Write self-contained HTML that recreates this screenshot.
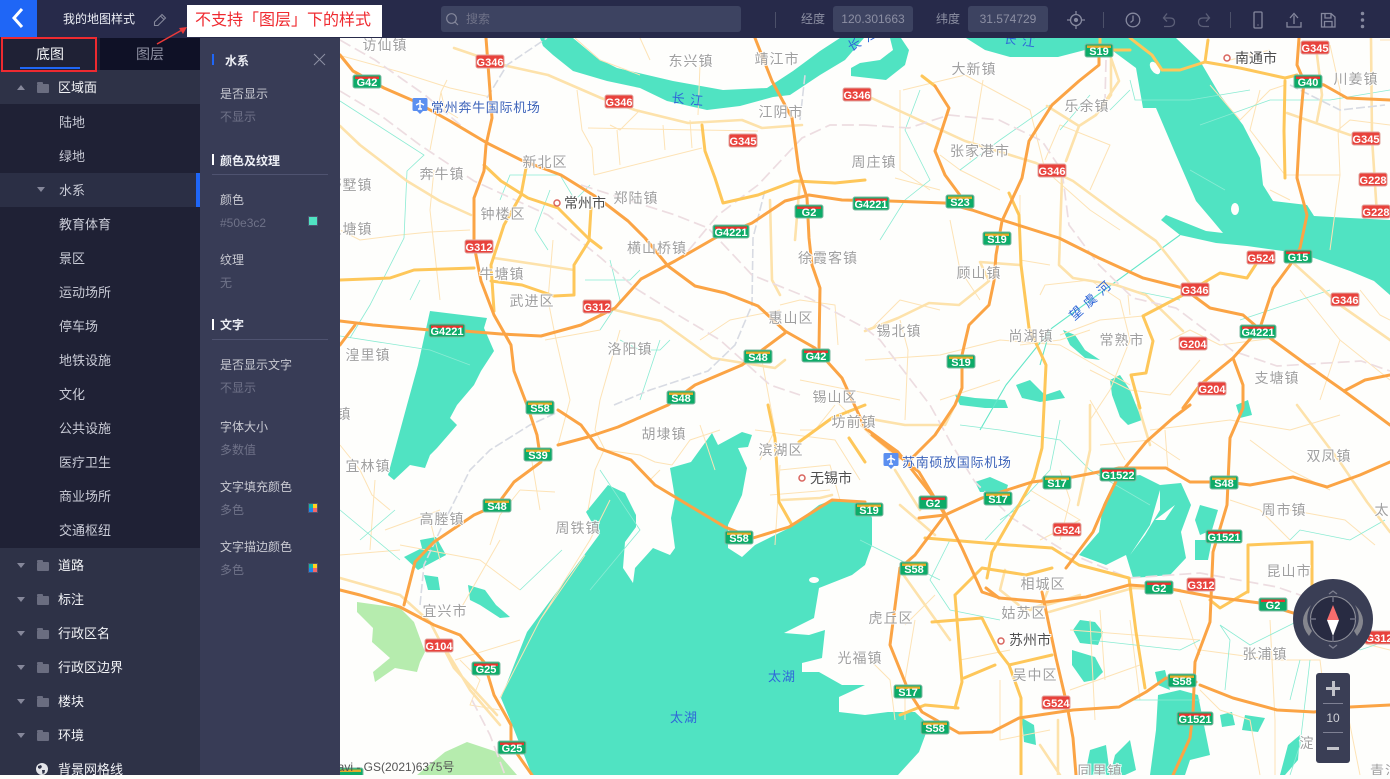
<!DOCTYPE html>
<html lang="zh-CN"><head><meta charset="utf-8"><title>我的地图样式</title>
<style>
html,body{margin:0;padding:0;width:1390px;height:775px;overflow:hidden;background:#fdfdfb;font-family:"Liberation Sans","Noto Sans CJK SC",sans-serif}
*{box-sizing:border-box}
#map{position:absolute;left:0;top:0;width:1390px;height:775px}
.abs,.t{position:absolute;white-space:nowrap}
#top{position:absolute;left:0;top:0;width:1390px;height:38px;background:#272a4a}
#back{position:absolute;left:0;top:0;width:37px;height:37px;background:#1f66f6}
.inp{position:absolute;top:6px;height:26px;background:#3d4361;border-radius:3px;color:#8c8fa3;font-size:12px;line-height:26px;text-align:center}
.sep{position:absolute;top:12px;width:1px;height:16px;background:#4c5069}
#side{position:absolute;left:0;top:38px;width:200px;height:737px;background:#2e3247}
#sub{position:absolute;left:0;top:66px;width:200px;height:444px;background:#1f2135}
#panel{position:absolute;left:200px;top:38px;width:140px;height:737px;background:#383c56}
.it{position:absolute;left:59px;font-size:13px;line-height:18px;color:#c9cbd6;margin-top:1px}
.pr{position:absolute;left:58px;font-size:13px;line-height:18px;color:#f2f3f6;margin-top:1px}
.l{position:absolute;left:20px;font-size:12px;line-height:16px;color:#c9cad2;margin-top:1px}
.v{position:absolute;left:20px;font-size:12px;line-height:16px;color:#6f7288;margin-top:1px}
.h{position:absolute;left:20px;font-size:12px;line-height:16px;color:#eceef4;font-weight:bold;margin-top:1px}
.bar{position:absolute;left:12px;width:2px;height:11px;background:#fff}
.ln{position:absolute;left:12px;width:116px;height:1px;background:#4f5370}
.ar{position:absolute;left:17px;width:0;height:0;border-left:4.5px solid transparent;border-right:4.5px solid transparent;border-top:5px solid #85879a}
.fd{position:absolute;left:37px;width:12px;height:9px;background:#6a6d80;border-radius:1px;margin-top:1px}
.fd:before{content:"";position:absolute;left:0;top:-2px;width:6px;height:2px;background:#6a6d80;border-radius:1px 1px 0 0}
.sw{position:absolute;left:109px;width:8px;height:8px}
#map text{font-family:"Liberation Sans","Noto Sans CJK SC",sans-serif}
.g{font-size:14px;fill:#a0a0a0;letter-spacing:1px;text-anchor:middle;paint-order:stroke;stroke:#fff;stroke-width:2px;stroke-opacity:.8}
.d{font-size:14px;fill:#4f4f4f;paint-order:stroke;stroke:#fff;stroke-width:2px}
.b{font-size:13px;fill:#3b62b8;letter-spacing:.7px;paint-order:stroke;stroke:#fff;stroke-width:1.5px}
.w{font-size:13px;fill:#2f66d8;letter-spacing:1px;text-anchor:middle}
.n{font-size:11px;fill:#fff;font-weight:bold;text-anchor:middle}
</style></head><body>

<svg id="map" viewBox="0 0 1390 775" xmlns="http://www.w3.org/2000/svg">
<defs>
<g id="r1"><rect x="-14" y="-6" width="28" height="13" rx="2" fill="#e8423c" stroke="#e0a7a0"/></g>
<g id="g1"><rect x="-14" y="-6" width="28" height="13" rx="2" fill="#0dab68" stroke="#7fb9a2"/><rect x="-12" y="-4.5" width="24" height="2.5" fill="#e8352f"/></g>
<g id="g2"><rect x="-18" y="-6" width="36" height="13" rx="2" fill="#0dab68" stroke="#7fb9a2"/><rect x="-16" y="-4.5" width="32" height="2.5" fill="#e8352f"/></g>
<g id="y1"><rect x="-14" y="-6" width="28" height="13" rx="2" fill="#0dab68" stroke="#7fb9a2"/><rect x="-12" y="-4.5" width="24" height="2.5" fill="#e2ab2c"/></g>
</defs>
<rect width="1390" height="775" fill="#fefefc"/>

<!-- forest -->
<g fill="#b6ecae">
<path d="M357 602L400 608L414 622L425 652L420 662L417 672L395 668L375 682L373 672L390 658L372 642L373 628L357 612Z"/>
<path d="M417 775L445 752L467 742L497 752L517 775Z"/>
<path d="M775 775L790 762L815 765L825 775Z"/>
<path d="M828 745L838 728L842 738L832 746Z"/>
</g>

<!-- water -->
<g fill="#50e3c2">
<path d="M540 38H573L597 58L617 68L673 81L723 90L767 88L793 71L820 51L840 38H864L845 60L820 75L790 95L773 97L740 106L707 110L667 101L640 88L607 81L573 71L553 55L543 46Z"/>
<path d="M851 76L886 80L905 65L909 50L901 38H890L893 50L880 60L860 63L851 68Z"/>
<path d="M966 38L985 50L1010 57L1058 57L1085 50L1113 51L1136 68L1143 108L1156 108L1176 155L1196 201L1213 221L1223 233L1206 231L1166 215L1161 220L1180 235L1216 243L1247 246L1283 251L1314 258L1350 271L1374 281L1390 295V220L1350 218L1314 216L1307 205L1273 201L1263 185L1260 158L1243 125L1220 95L1200 61L1176 38Z"/>
<path d="M608 485L625 493L636 515L636 527L625 542L623 568L633 583L635 568L653 548L670 555L675 548L671 518L675 498L670 468L691 462L712 433L718 445L742 432L752 435L748 447L738 448L747 468L742 495L728 525L728 548L742 557L755 545L789 528L819 505L832 500L865 503L872 518L872 545L865 565L852 575L819 588L814 618L784 633L809 635L825 630L822 658L802 663L802 672L819 672L842 685L865 685L839 697L839 712L865 715L888 712L915 712L929 725L919 752L898 775H532L511 722L501 698L527 632L599 535L586 512Z"/>
<path d="M430 311L487 318L484 328L494 351L481 371L474 385L457 405L450 418L457 425L437 448L430 455L425 468L410 465L394 480L388 475L407 405L418 365Z"/>
<path d="M1116 478L1140 475L1160 485L1181 483L1191 505L1181 532L1186 558L1170 575L1133 578L1126 555L1106 565L1079 555L1099 532L1103 505Z"/>
<path d="M975 482L990 477L1008 485L1006 492L980 492Z"/>
<path d="M1080 620L1095 622L1103 632L1098 645L1080 643L1073 630Z"/>
<path d="M1072 650L1095 657L1103 672L1095 680L1084 682L1072 665Z"/>
<path d="M1158 695L1180 690L1198 695L1205 730L1210 755L1190 760L1185 775H1150L1156 730Z"/>
<path d="M1220 715L1232 712L1235 725L1222 727Z"/>
<path d="M1245 715L1265 718L1258 732L1242 730Z"/>
<path d="M1115 755L1130 740L1136 770L1125 775H1110Z"/>
<path d="M1280 775L1288 745L1300 735L1298 760L1285 775Z"/>
<path d="M1155 672L1165 670L1170 690L1158 685Z"/>
<path d="M1200 505L1218 510L1212 530L1200 535L1195 520Z"/>
<path d="M1195 540L1212 540L1208 560L1195 560Z"/>
<path d="M1063 330L1075 335L1085 350L1100 360L1085 358L1070 345Z"/>
<path d="M1110 380L1120 375L1130 390L1136 405L1142 420L1128 425L1120 417L1112 395Z"/>
<path d="M1236 405L1248 400L1252 415L1240 418Z"/>
<path d="M468 585L485 590L496 605L510 617L500 618L480 605L470 600Z"/>
<path d="M422 548L420 540L436 537L446 555L418 570L404 557Z"/>
<path d="M424 575L438 577L440 590L428 590Z"/>
<path d="M1090 750L1106 745L1110 775H1085Z"/>
<path d="M1022 718L1034 725L1036 745L1024 742Z"/>
<path d="M1016 385L1030 380L1045 395L1060 390L1065 398L1040 402L1022 398Z"/>
<path d="M955 395L975 398L1005 400L1008 408H985L960 405Z"/>
</g>
<g fill="#fefefc">
<ellipse cx="1155" cy="68" rx="4" ry="7" transform="rotate(-35 1155 68)"/>
<ellipse cx="1235" cy="209" rx="4" ry="6"/>
<ellipse cx="814" cy="580" rx="5" ry="3"/>
<path d="M1160 490L1150 525L1130 555L1145 535L1160 510Z"/>
<path d="M1175 505L1155 520L1165 520Z"/>
</g>

<!-- thin roads -->
<g fill="none" stroke="#fde3b6" stroke-width="1" stroke-linejoin="round">
<path d="M342 56L400 72L450 88L490 97M447 80L441 92L445 110L458 118M441 92L430 150"/>
<path d="M588 128L758 131M594 175L702 148M594 175L592 148L582 130L577 90M620 165L617 130M665 150L663 125M692 148L690 120"/>
<path d="M340 230L360 240L400 235L430 232L470 230M434 170L430 210L440 300"/>
<path d="M575 38L600 60L640 75M640 38L650 60M700 65L698 115M640 110L620 130L610 125"/>
<path d="M553 240L548 300L555 335L570 400L558 445M545 340L600 330M620 330L600 400L595 430"/>
<path d="M780 305L800 300L835 305L838 345M700 340L730 320L780 310M760 350L775 430L760 460M755 430L835 440L860 480M800 380L900 400M835 400L870 435L900 460"/>
<path d="M870 330L900 300L940 310M900 320L908 350L905 420M865 360L940 355L1000 340L1060 345L1130 385M940 400L1000 380"/>
<path d="M900 90L900 170L930 190M903 90L965 75L1030 110L1045 170L1090 210L1120 230M983 80L970 160M1045 160L1060 125L1110 145L1090 190"/>
<path d="M895 178L940 190M940 155L960 170L1000 190M1020 195L1020 260L1050 265M950 220L960 270L980 300"/>
<path d="M1040 295L1045 285L1090 280L1120 300L1130 340L1110 390L1090 420M1060 335L1100 320L1143 316M1130 315L1128 295"/>
<path d="M1090 370L1130 390L1170 395L1200 360M1170 340L1190 330L1220 345L1275 338M1090 330L1060 340L1020 345"/>
<path d="M1260 90L1250 130L1285 175L1340 175L1338 130L1350 120L1390 125M1340 175L1330 250M1290 200L1270 190"/>
<path d="M1230 60L1270 50M1210 85L1240 120L1270 90L1285 85M1330 45L1340 90L1340 130M1380 40L1390 40"/>
<path d="M1300 290L1340 340L1390 380M1340 340L1320 400M1360 290L1380 315L1390 320"/>
<path d="M1100 445L1150 440L1180 460M1090 400L1125 460M1150 430L1230 420L1290 430L1340 415M1165 430L1168 470"/>
<path d="M1230 500L1260 510L1290 540M1250 440L1290 470L1330 490M1290 510L1345 520L1375 545"/>
<path d="M1200 650L1275 660L1320 660L1325 700M1270 620L1275 720L1275 775M1200 690L1220 710L1250 720L1260 775M1345 700L1360 775M1350 640L1390 650"/>
<path d="M1070 630L1200 640M1100 610L1105 680M1070 690L1140 665M1130 620L1140 700M1180 600L1195 645L1200 655"/>
<path d="M870 660L890 680L895 720M915 620L905 680L905 720M935 595L905 625M960 660L1010 650M1000 680L1000 740L1050 730"/>
<path d="M1060 540L1070 500L1060 470M1030 490L1080 520L1040 540M1090 620L1095 720"/>
<path d="M340 445L360 470L372 495L390 510M375 480L370 550M385 530L440 510M400 545L480 560L520 590M440 560L430 520M490 545L500 515L520 490M500 540L460 610M340 555L400 550"/>
<path d="M610 500L590 540L540 620L500 698M585 555L540 620M530 450L540 510M520 490L555 492"/>
<path d="M604 450L595 470L588 510M660 470L650 480M595 430L605 450L640 455L655 462L672 465L690 440L720 430"/>
<path d="M780 465L775 545M780 470L830 465L840 500M770 495L830 490M800 430L815 430L835 405"/>
<path d="M460 660L480 680L470 705L500 710M455 660L520 640"/>
<path d="M700 425L715 470"/>
</g>

<!-- teal rivers -->
<g fill="none" stroke="#8aebd3" stroke-width=".8">
<path d="M340 101L424 155L407 171L404 238L370 305L350 338M340 336L430 350L470 365M410 300L420 280"/>
<path d="M1180 235L1052 328L1006 385M1006 385L980 430M1050 330L1040 365" stroke="#63e6c8" stroke-width="1.100"/>
<path d="M920 90L905 130L930 180L905 200L880 240M1050 105L1000 140L960 170M1090 95L1060 130M1130 90L1110 110"/>
<path d="M1190 170L1225 190M1130 290L1180 300M1240 320L1300 300L1330 290"/>
<path d="M1130 80L1135 100L1190 100L1250 90M1200 125L1270 100L1330 100L1390 90"/>
<path d="M500 200L510 175L560 175L575 200L590 185M550 190L535 230L548 250M610 260L620 300L600 330"/>
<path d="M585 280L630 280L640 270M620 340L640 350L660 350L670 340M660 340L640 400"/>
<path d="M590 590L640 530L600 470M562 550L520 590M340 510L400 560M360 540L395 510"/>
<path d="M1150 505L1090 470L1060 440L1000 430L960 425M985 540L1050 470L1060 420M1000 520L1030 500"/>
<path d="M1225 690L1230 640L1220 625L1250 645L1300 620L1320 620L1340 640L1360 650L1390 640M1090 640L1180 650L1200 640M1130 700L1200 700M1300 660L1290 700M1310 660L1300 745L1290 775"/>
<path d="M1290 540L1300 530L1350 540L1385 520"/>
<path d="M950 540L930 580L950 610L1000 620M860 540L940 580"/>
</g>

<!-- pale secondary roads -->
<g fill="none" stroke="#fde2ab" stroke-width="2.6" stroke-linejoin="round" stroke-linecap="round">
<path d="M454 48L507 66L548 75L601 98L635 110L688 123L742 120L762 128L802 125"/>
<path d="M340 126L360 145L407 181L440 201L471 215"/>
<path d="M494 258L541 265L574 270"/>
<path d="M865 95L915 118L965 141L1036 163L1073 181L1119 215L1156 241L1191 285L1200 291"/>
<path d="M1062 178L1059 265L1073 278L1116 285L1146 295L1183 331"/>
<path d="M1047 106L1079 126L1096 115L1111 95L1111 58M1111 58L1119 81L1096 115M1079 126L1066 161"/>
<path d="M1317 55L1322 95L1317 121M1371 38L1372 138L1377 215M1287 113L1350 135"/>
<path d="M865 331L898 318L929 303L959 305L989 281M989 281L980 262L1020 265"/>
<path d="M1297 405L1340 462L1367 502L1390 532M1290 260L1340 305L1390 340"/>
<path d="M615 310L661 321L712 358L775 368L785 360"/>
<path d="M340 578L400 595L430 622L454 668L497 715M440 640L470 690L500 725"/>
<path d="M800 180L795 240M770 200L772 280L780 295"/>
<path d="M1005 570L1000 590L1025 610L1042 605L1048 590M900 570L950 640M1030 610L1080 595"/>
<path d="M865 418L905 425L945 425L955 405M895 470L920 510M900 505L935 535"/>
<path d="M1049 612L1133 588L1180 590M1040 745L1060 775M1058 720L1058 775"/>
<path d="M1078 505L1090 450L1090 405M1138 405L1150 445"/>
<path d="M782 500L820 498L832 495"/>
</g>

<!-- rail -->
<g fill="none" stroke="#d8dbe3" stroke-width="1.6" stroke-dasharray="9 3">
<path d="M487 98L507 65L547 38"/>
<path d="M614 405L650 390L708 371L735 345L752 305L753 238L765 190"/>
<path d="M420 605L424 565L445 520L470 470L490 450L530 425L558 412"/>
<path d="M800 120L805 75"/>
<path d="M1290 85L1340 110L1385 105"/>
</g>
<g fill="none" stroke="#eddde1" stroke-width="1.700" stroke-dasharray="12 5">
<path d="M340 40L375 60L425 95L472 135"/>
<path d="M340 91L380 115L420 145L474 181L548 215L601 258L635 288L678 315L720 340L770 385L800 395"/>
<path d="M581 185L675 215L708 228L752 275L809 298L865 328L880 340L930 405L952 445L975 482L1012 518L1066 552L1129 578L1200 573L1277 587L1320 602"/>
<path d="M865 125L909 128L949 115L999 120L1042 141L1062 171L1069 225L1099 265L1133 298L1176 308L1233 351L1277 366L1361 361L1390 371"/>
<path d="M688 251L718 215L758 185L802 138L830 125L865 125"/>
<path d="M472 700L490 735L505 775"/>
<path d="M1106 60L1105 100"/>
</g>

<!-- yellow roads -->
<g fill="none" stroke="#fec75a" stroke-width="3" stroke-linejoin="round" stroke-linecap="round">
<path d="M340 280L390 278L414 270L474 268"/>
<path d="M484 165L501 181L528 198L558 208L588 238L601 248"/>
<path d="M526 168L521 195L504 225L491 265L494 311"/>
<path d="M591 208L589 241L574 265L574 295L554 296L522 285L491 281"/>
<path d="M702 125L705 151L715 178L723 203L758 195L795 181L835 183L865 180"/>
<path d="M1009 193L1019 215L1021 265L1029 328L1046 365L1042 448L1034 478L1019 505L992 552L987 578"/>
<path d="M1285 81L1284 131L1285 178"/>
<path d="M1143 316L1153 341L1146 373L1131 375L1140 408M1143 316L1183 295L1220 273L1247 278L1260 258"/>
<path d="M1248 592L1248 545L1312 542L1312 592M1247 592L1220 608L1210 600"/>
<path d="M925 538L1009 545L1052 548L1079 565L1129 578L1136 632L1145 688"/>
<path d="M955 595L962 682L955 708M955 595L982 568L1026 575L1052 568M932 622L982 618L999 652L1009 665L1052 655M964 678L995 665M1009 665L1021 698L1021 775"/>
<path d="M922 76L935 86"/>
<path d="M958 708L925 705L900 715"/>
<path d="M1100 38L1100 50L1130 50M1208 40L1205 62L1240 68L1285 78L1297 75M1205 62L1180 70L1162 70L1152 55L1130 38"/>
<path d="M768 405L775 438L779 502L792 525"/>
<path d="M799 442L832 418L865 405"/>
<path d="M849 438L865 462"/>
</g>

<!-- highways -->
<g fill="none" stroke="#fba445" stroke-width="3" stroke-linejoin="round" stroke-linecap="round">
<path d="M340 55L353 71L384 88L414 101L450 121L487 143L521 160L561 175L598 198L628 221L645 238L668 266L695 286L725 293L758 306L785 331L815 348L842 378L865 428L898 452L942 508L962 548L982 592L1000 598"/>
<path d="M486 38L489 78L492 118L486 145L484 171L474 198L474 245L481 281L494 315L511 345L514 371L527 405L537 435L541 462L514 482L497 505L474 515L434 542L415 562L404 605"/>
<path d="M340 321L373 325L430 330L464 331L501 334L541 336L581 325L615 308L641 279L675 261L715 238L752 223L785 201L809 195L842 200L888 201L945 203L972 210L1002 220L1059 238L1099 258L1143 278L1183 288L1210 308L1243 315L1270 338L1307 365L1344 391L1367 408L1390 425"/>
<path d="M1099 55L1099 65L1079 81L1052 105L1029 141L1022 178L1002 221L996 255L994 281L989 305L969 325L962 355L962 388L955 405L935 435L908 462"/>
<path d="M755 38L772 81L792 118L799 171L807 198L809 238L812 265L820 288L819 348"/>
<path d="M935 86L949 108L935 151L945 175L962 198"/>
<path d="M1299 38L1297 65L1304 81L1300 125L1297 178L1307 215L1300 248L1290 265L1273 288L1260 328L1233 358L1200 385L1183 408"/>
<path d="M1308 81L1324 85L1347 98L1390 100"/>
<path d="M1233 358L1243 385L1243 408L1230 438L1227 505L1213 552L1210 622L1195 662L1193 712L1190 738L1173 775"/>
<path d="M919 518L945 515L982 498L1032 482L1073 477L1119 468L1166 468L1190 482L1227 482L1250 485L1293 477L1327 487L1360 475L1390 462"/>
<path d="M986 588L999 598L1046 602L1086 597L1129 585L1160 587L1213 597L1260 603L1300 615"/>
<path d="M1066 568L1093 532L1106 502L1119 475L1146 442L1173 418L1190 405"/>
<path d="M1196 682L1166 678L1146 692L1119 707L1073 710L1019 718L992 732L959 733L922 712L909 692L890 645L900 568"/>
<path d="M1200 685L1233 698L1277 710L1314 712L1350 707L1390 705"/>
<path d="M1042 592L1056 658L1067 705L1073 738L1076 775"/>
<path d="M558 410L581 425L598 448L631 460L655 485L725 527L753 538L789 527L819 508L832 500L865 502"/>
<path d="M558 445L588 437L618 427L668 405L695 385L742 365L785 333"/>
<path d="M340 590L360 595L400 607L434 625L460 635L484 662L494 695L511 725L511 745L532 775"/>
<path d="M340 345L355 325"/>
<path d="M945 515L915 555L900 568"/>
<path d="M945 515L919 472L872 435"/>
<path d="M1344 391L1365 380L1390 375"/>
</g>

<!-- badges -->
<g>
<use href="#r1" x="490" y="61"/><use href="#r1" x="619" y="101"/><use href="#r1" x="857" y="94"/><use href="#r1" x="1052" y="170"/><use href="#r1" x="1195" y="289"/><use href="#r1" x="1345" y="299"/><use href="#r1" x="743" y="140"/><use href="#r1" x="1315" y="47"/><use href="#r1" x="1366" y="138"/><use href="#r1" x="479" y="246"/><use href="#r1" x="597" y="306"/><use href="#r1" x="1379" y="637"/><use href="#r1" x="1193" y="343"/><use href="#r1" x="1212" y="388"/><use href="#r1" x="1373" y="179"/><use href="#r1" x="1376" y="211"/><use href="#r1" x="1261" y="257"/><use href="#r1" x="1067" y="529"/><use href="#r1" x="1056" y="702"/><use href="#r1" x="1201" y="584"/><use href="#r1" x="439" y="645"/>
<use href="#g1" x="367" y="81"/><use href="#g1" x="816" y="355"/><use href="#g2" x="447" y="330"/><use href="#g2" x="731" y="231"/><use href="#g2" x="1258" y="331"/><use href="#g2" x="871" y="203"/><use href="#g1" x="809" y="211"/><use href="#g1" x="486" y="668"/><use href="#g1" x="512" y="747"/><use href="#g1" x="1298" y="256"/><use href="#g1" x="1308" y="81"/><use href="#g2" x="1118" y="474"/><use href="#g1" x="933" y="502"/><use href="#g2" x="1224" y="536"/><use href="#g1" x="1159" y="587"/><use href="#g1" x="1273" y="604"/><use href="#g2" x="1195" y="718"/>
<use href="#y1" x="1099" y="50"/><use href="#y1" x="997" y="238"/><use href="#y1" x="961" y="361"/><use href="#y1" x="960" y="201"/><use href="#y1" x="758" y="356"/><use href="#y1" x="681" y="397"/><use href="#y1" x="540" y="407"/><use href="#y1" x="538" y="454"/><use href="#y1" x="497" y="505"/><use href="#y1" x="739" y="537"/><use href="#y1" x="869" y="509"/><use href="#y1" x="1057" y="482"/><use href="#y1" x="998" y="498"/><use href="#y1" x="914" y="568"/><use href="#y1" x="1224" y="482"/><use href="#y1" x="1182" y="680"/><use href="#y1" x="908" y="691"/><use href="#y1" x="935" y="727"/><use href="#y1" x="349" y="774"/>
</g>
<g class="n">
<text class="n" x="490" y="66">G346</text><text class="n" x="619" y="106">G346</text><text class="n" x="857" y="99">G346</text><text class="n" x="1052" y="175">G346</text><text class="n" x="1195" y="294">G346</text><text class="n" x="1345" y="304">G346</text><text class="n" x="743" y="145">G345</text><text class="n" x="1315" y="52">G345</text><text class="n" x="1366" y="143">G345</text><text class="n" x="479" y="251">G312</text><text class="n" x="597" y="311">G312</text><text class="n" x="1379" y="642">G312</text><text class="n" x="1193" y="348">G204</text><text class="n" x="1212" y="393">G204</text><text class="n" x="1373" y="184">G228</text><text class="n" x="1376" y="216">G228</text><text class="n" x="1261" y="262">G524</text><text class="n" x="1067" y="534">G524</text><text class="n" x="1056" y="707">G524</text><text class="n" x="1201" y="589">G312</text><text class="n" x="439" y="650">G104</text>
<text class="n" x="367" y="86">G42</text><text class="n" x="816" y="360">G42</text><text class="n" x="447" y="335">G4221</text><text class="n" x="731" y="236">G4221</text><text class="n" x="1258" y="336">G4221</text><text class="n" x="871" y="208">G4221</text><text class="n" x="809" y="216">G2</text><text class="n" x="486" y="673">G25</text><text class="n" x="512" y="752">G25</text><text class="n" x="1298" y="261">G15</text><text class="n" x="1308" y="86">G40</text><text class="n" x="1118" y="479">G1522</text><text class="n" x="933" y="507">G2</text><text class="n" x="1224" y="541">G1521</text><text class="n" x="1159" y="592">G2</text><text class="n" x="1273" y="609">G2</text><text class="n" x="1195" y="723">G1521</text>
<text class="n" x="1099" y="55">S19</text><text class="n" x="997" y="243">S19</text><text class="n" x="961" y="366">S19</text><text class="n" x="960" y="206">S23</text><text class="n" x="758" y="361">S48</text><text class="n" x="681" y="402">S48</text><text class="n" x="540" y="412">S58</text><text class="n" x="538" y="459">S39</text><text class="n" x="497" y="510">S48</text><text class="n" x="739" y="542">S58</text><text class="n" x="869" y="514">S19</text><text class="n" x="1057" y="487">S17</text><text class="n" x="998" y="503">S17</text><text class="n" x="914" y="573">S58</text><text class="n" x="1224" y="487">S48</text><text class="n" x="1182" y="685">S58</text><text class="n" x="908" y="696">S17</text><text class="n" x="935" y="732">S58</text>
</g>

<!-- labels -->
<g>
<text class="g" x="385" y="50">访仙镇</text><text class="g" x="691" y="66">东兴镇</text><text class="g" x="777" y="64">靖江市</text><text class="g" x="974" y="74">大新镇</text><text class="g" x="1356" y="84">川姜镇</text><text class="g" x="1087" y="111">乐余镇</text><text class="g" x="781" y="117">江阴市</text><text class="g" x="874" y="167">周庄镇</text><text class="g" x="980" y="156">张家港市</text><text class="g" x="545" y="167">新北区</text><text class="g" x="442" y="179">奔牛镇</text><text class="g" x="636" y="203">郑陆镇</text><text class="g" x="350" y="190">野墅镇</text><text class="g" x="503" y="219">钟楼区</text><text class="g" x="350" y="234">里塘镇</text><text class="g" x="657" y="253">横山桥镇</text><text class="g" x="828" y="263">徐霞客镇</text><text class="g" x="979" y="278">顾山镇</text><text class="g" x="502" y="279">牛塘镇</text><text class="g" x="532" y="306">武进区</text><text class="g" x="791" y="323">惠山区</text><text class="g" x="899" y="336">锡北镇</text><text class="g" x="1031" y="341">尚湖镇</text><text class="g" x="1122" y="345">常熟市</text><text class="g" x="630" y="354">洛阳镇</text><text class="g" x="368" y="360">湟里镇</text><text class="g" x="835" y="402">锡山区</text><text class="g" x="1277" y="383">支塘镇</text><text class="g" x="344" y="419">镇</text><text class="g" x="664" y="439">胡埭镇</text><text class="g" x="854" y="427">坊前镇</text><text class="g" x="781" y="455">滨湖区</text><text class="g" x="368" y="471">宜林镇</text><text class="g" x="1329" y="461">双凤镇</text><text class="g" x="1284" y="515">周市镇</text><text class="g" x="1382" y="515">太</text><text class="g" x="442" y="524">高塍镇</text><text class="g" x="578" y="533">周铁镇</text><text class="g" x="1289" y="576">昆山市</text><text class="g" x="1043" y="589">相城区</text><text class="g" x="445" y="616">宜兴市</text><text class="g" x="1024" y="618">姑苏区</text><text class="g" x="891" y="623">虎丘区</text><text class="g" x="1265" y="659">张浦镇</text><text class="g" x="860" y="663">光福镇</text><text class="g" x="1035" y="680">吴中区</text><text class="g" x="1322" y="748">淀山湖</text><text class="g" x="1100" y="776">同里镇</text><text class="g" x="1385" y="776">青浦</text>
<text class="d" x="1235" y="63">南通市</text><text class="d" x="564" y="208">常州市</text><text class="d" x="810" y="483">无锡市</text><text class="d" x="1009" y="645">苏州市</text>
<circle cx="1227" cy="58" r="3" fill="none" stroke="#d9655f" stroke-width="1.5"/><circle cx="557" cy="203" r="3" fill="none" stroke="#d9655f" stroke-width="1.5"/><circle cx="802" cy="478" r="3" fill="none" stroke="#d9655f" stroke-width="1.5"/><circle cx="1001" cy="641" r="3" fill="none" stroke="#d9655f" stroke-width="1.5"/>
<text class="b" x="431" y="112">常州奔牛国际机场</text><text class="b" x="902" y="467">苏南硕放国际机场</text>
<path d="M414 98h12a1.5 1.5 0 0 1 1.5 1.500v10a1.500 1.500 0 0 1-1.500 1.500h-3l-3 3-3-3h-3a1.500 1.500 0 0 1-1.500-1.500v-10a1.500 1.500 0 0 1 1.500-1.500z" fill="#5b8ff0"/>
<path d="M885 453h12a1.500 1.500 0 0 1 1.500 1.500v10a1.500 1.500 0 0 1-1.500 1.500h-3l-3 3-3-3h-3a1.500 1.500 0 0 1-1.500-1.500v-10a1.500 1.500 0 0 1 1.500-1.500z" fill="#5b8ff0"/>
<path d="M420 100v9M416 105l4-2 4 2M418 109h4" stroke="#fff" stroke-width="1.500" fill="none"/>
<path d="M891 455v9M887 460l4-2 4 2M889 464h4" stroke="#fff" stroke-width="1.500" fill="none"/>
<text class="w" x="688" y="104" transform="rotate(6 688 99)">长 江</text><text class="w" x="1020" y="45" transform="rotate(8 1020 40)">长 江</text><text class="w" x="863" y="44" transform="rotate(-30 863 40)">长 江</text><text class="w" x="1090" y="305" transform="rotate(-42 1090 300)">望 虞 河</text><text class="w" x="782" y="681">太湖</text><text class="w" x="684" y="722">太湖</text>
<text x="329" y="771" font-size="12" fill="#555">Navi - GS(2021)6375号</text>
</g>
</svg>

<!-- top bar -->
<div id="top">
<div id="back"><svg width="37" height="37" viewBox="0 0 37 37"><path d="M22 9L14 18L22 27" fill="none" stroke="#fff" stroke-width="3"/></svg></div>
<div class="t" style="left:63px;top:11px;font-size:12px;line-height:17px;color:#eceef5">我的地图样式</div>
<svg class="abs" style="left:153px;top:13px" width="14" height="14" viewBox="0 0 14 14"><path d="M9 1.500L12.500 5L5 12.500H1.500V9ZM7.500 3L11 6.500" fill="none" stroke="#85889b" stroke-width="1.100"/></svg>
<div class="inp" style="left:441px;width:300px;text-align:left;padding-left:25px;color:#6f7288">搜索</div>
<svg class="abs" style="left:445px;top:12px" width="15" height="15" viewBox="0 0 15 15"><circle cx="6.500" cy="6.500" r="4.800" fill="none" stroke="#84879b" stroke-width="1.200"/><path d="M10 10L13 13" stroke="#84879b" stroke-width="1.200"/></svg>
<div class="sep" style="left:775px"></div>
<div class="t" style="left:801px;top:11px;font-size:12px;line-height:17px;color:#8d90a3">经度</div>
<div class="inp" style="left:833px;width:80px">120.301663</div>
<div class="t" style="left:936px;top:11px;font-size:12px;line-height:17px;color:#8d90a3">纬度</div>
<div class="inp" style="left:968px;width:80px">31.574729</div>
<div class="sep" style="left:1103px"></div><div class="sep" style="left:1230px"></div>
<svg class="abs" style="left:1060px;top:6px" width="320" height="28" viewBox="0 0 320 28" fill="none" stroke="#85889e" stroke-width="1.300">
<circle cx="16" cy="14" r="5.500"/><circle cx="16" cy="14" r="1.500" fill="#85889e"/><path d="M16 5v3.500M16 19.500V23M7 14h3.500M21.500 14H25"/>
<circle cx="73" cy="14" r="6.800"/><path d="M73 9.500V14.500L70.500 16.500"/>
<path d="M104 12H110Q114.500 12 114.500 16T110 20.500H104M107 7.500L103.500 12L107 15.500" stroke="#5c5f78"/>
<path d="M149 12H143Q138.500 12 138.500 16T143 20.500H149M146 7.500L149.500 12L146 15.500" stroke="#5c5f78"/>
<rect x="194" y="6" width="8" height="16" rx="1"/><path d="M198 18.500V19.500"/>
<path d="M234 9.500L234 18M230 12L234 7.500L238 12M227 16V21H241V16"/>
<path d="M261.500 7.500H271L275 11V21H261.500ZM265 7.500V12H271V7.500M264.500 21V15.500H272V21"/>
<circle cx="302.500" cy="7.500" r="1.100" fill="#85889e"/><circle cx="302.500" cy="14" r="1.100" fill="#85889e"/><circle cx="302.500" cy="20.500" r="1.100" fill="#85889e"/>
</svg>
</div>

<!-- sidebar -->
<div id="side">
<div class="abs" style="left:0;top:0;width:100px;height:32px;background:#1f2135"></div>
<div class="abs" style="left:100px;top:0;width:100px;height:32px;background:#0f1126"></div>
<div class="abs" style="left:20px;top:29px;width:60px;height:2px;background:#1f66f6"></div>
<div class="t" style="left:36px;top:6px;font-size:14px;line-height:20px;color:#f4f5f8">底图</div>
<div class="t" style="left:136px;top:6px;font-size:14px;line-height:20px;color:#8f91a3">图层</div>
<div id="sub"></div>
<div class="abs" style="left:0;top:135px;width:200px;height:34px;background:#2b2f45"></div>
<div class="abs" style="left:196px;top:135px;width:4px;height:34px;background:#1f66f6"></div>

<div class="ar" style="top:47px;border-top:0;border-bottom:5px solid #85879a"></div><div class="fd" style="top:45px"></div><div class="pr" style="top:40px">区域面</div>
<div class="it" style="top:75px">陆地</div><div class="it" style="top:109px">绿地</div>
<div class="ar" style="left:37px;top:149px"></div><div class="it" style="top:143px">水系</div>
<div class="it" style="top:177px">教育体育</div><div class="it" style="top:211px">景区</div><div class="it" style="top:245px">运动场所</div><div class="it" style="top:279px">停车场</div><div class="it" style="top:313px">地铁设施</div><div class="it" style="top:347px">文化</div><div class="it" style="top:381px">公共设施</div><div class="it" style="top:415px">医疗卫生</div><div class="it" style="top:449px">商业场所</div><div class="it" style="top:483px">交通枢纽</div>

<div class="ar" style="top:525px"></div><div class="fd" style="top:523px"></div><div class="pr" style="top:518px">道路</div>
<div class="ar" style="top:559px"></div><div class="fd" style="top:557px"></div><div class="pr" style="top:552px">标注</div>
<div class="ar" style="top:593px"></div><div class="fd" style="top:591px"></div><div class="pr" style="top:586px">行政区名</div>
<div class="ar" style="top:627px"></div><div class="fd" style="top:625px"></div><div class="pr" style="top:620px">行政区边界</div>
<div class="ar" style="top:661px"></div><div class="fd" style="top:659px"></div><div class="pr" style="top:654px">楼块</div>
<div class="ar" style="top:695px"></div><div class="fd" style="top:693px"></div><div class="pr" style="top:688px">环境</div>
<svg class="abs" style="left:36px;top:725px" width="12" height="12" viewBox="0 0 12 12"><circle cx="6" cy="6" r="6" fill="#e4e5ea"/><path d="M2 3L5 2L6 4L4 6L2 5ZM6 7L9 7L8.500 10L6.500 11Z" fill="#2e3247"/></svg>
<div class="pr" style="top:722px">背景网格线</div>
</div>

<!-- style panel -->
<div id="panel">
<div class="abs" style="left:12px;top:16px;width:2px;height:11px;background:#1f66f6"></div>
<div class="h" style="left:25px;top:14px">水系</div>
<svg class="abs" style="left:113px;top:15px" width="13" height="13" viewBox="0 0 13 13"><path d="M1 1L12 12M12 1L1 12" stroke="#8d90a3" stroke-width="1"/></svg>
<div class="l" style="top:47px">是否显示</div><div class="v" style="top:70px">不显示</div>
<div class="bar" style="top:116px"></div><div class="h" style="top:114px">颜色及纹理</div><div class="ln" style="top:136px"></div>
<div class="l" style="top:153px">颜色</div><div class="v" style="top:176px">#50e3c2</div><div class="sw" style="top:179px;background:#50e3c2;outline:1px solid #4f5370"></div>
<div class="l" style="top:213px">纹理</div><div class="v" style="top:236px">无</div>
<div class="bar" style="top:281px"></div><div class="h" style="top:278px">文字</div><div class="ln" style="top:301px"></div>
<div class="l" style="top:318px">是否显示文字</div><div class="v" style="top:341px">不显示</div>
<div class="l" style="top:380px">字体大小</div><div class="v" style="top:403px">多数值</div>
<div class="l" style="top:440px">文字填充颜色</div><div class="v" style="top:463px">多色</div>
<div class="sw" style="top:466px;background:linear-gradient(90deg,#12b5a5 50%,#ffd21f 50%);outline:1px solid #4f5370"><div style="width:8px;height:4px;margin-top:4px;background:linear-gradient(90deg,#1c8af0 50%,#f4656a 50%)"></div></div>
<div class="l" style="top:500px">文字描边颜色</div><div class="v" style="top:523px">多色</div>
<div class="sw" style="top:526px;background:linear-gradient(90deg,#12b5a5 50%,#ffd21f 50%);outline:1px solid #4f5370"><div style="width:8px;height:4px;margin-top:4px;background:linear-gradient(90deg,#1c8af0 50%,#f4656a 50%)"></div></div>
</div>

<!-- annotations -->
<div class="abs" style="left:1px;top:37px;width:96px;height:35px;border:2px solid #ee2a30"></div>
<div class="abs" style="left:187px;top:5px;width:195px;height:32px;background:#fff;color:#ef2a30;font-size:16px;line-height:32px;padding-left:8px">不支持「图层」下的样式</div>
<svg class="abs" style="left:150px;top:20px" width="40" height="30" viewBox="0 0 40 30"><path d="M7 24L32 10" stroke="#ea3a3a" stroke-width="1.500"/><path d="M37 7L29 8L33 14Z" fill="#ea3a3a"/></svg>

<!-- compass -->
<svg class="abs" style="left:1290px;top:576px" width="86" height="86" viewBox="0 0 86 86">
<circle cx="43" cy="43" r="40" fill="#3a3e55"/>
<circle cx="43" cy="43" r="22.500" fill="#282b42" stroke="#8f909a" stroke-width="1"/>
<path d="M43 20V26M43 60V66M20 43H26M60 43H66" stroke="#6f7183" stroke-width="1.500"/>
<path d="M43 29L37 44H49Z" fill="#f76d6d"/>
<path d="M37 44L43 60L49 44Z" fill="#fff"/>
<path d="M21 29Q6 44 19 60L22 55Q13 44 21 29Z" fill="#85868e"/>
<path d="M65 29Q80 44 67 60L64 55Q73 44 65 29Z" fill="#85868e"/>
<path d="M39 18L43 15L47 18M39 69L43 72L47 69" fill="none" stroke="#7d7f90" stroke-width="1.300"/>
</svg>

<!-- zoom -->
<div class="abs" style="left:1316px;top:673px;width:34px;height:90px;background:#3a3e55;border-radius:3px">
<div class="abs" style="left:10px;top:14px;width:14px;height:3px;background:#c2c3ca"></div>
<div class="abs" style="left:15.500px;top:8px;width:3px;height:15px;background:#c2c3ca"></div>
<div class="abs" style="left:7px;top:30px;width:20px;height:1px;background:#7e8093"></div>
<div class="abs" style="left:0;top:37px;width:34px;text-align:center;font-size:12px;line-height:16px;color:#cfd0d6">10</div>
<div class="abs" style="left:7px;top:59px;width:20px;height:1px;background:#7e8093"></div>
<div class="abs" style="left:11px;top:74px;width:12px;height:3px;background:#c2c3ca"></div>
</div>
</body></html>
